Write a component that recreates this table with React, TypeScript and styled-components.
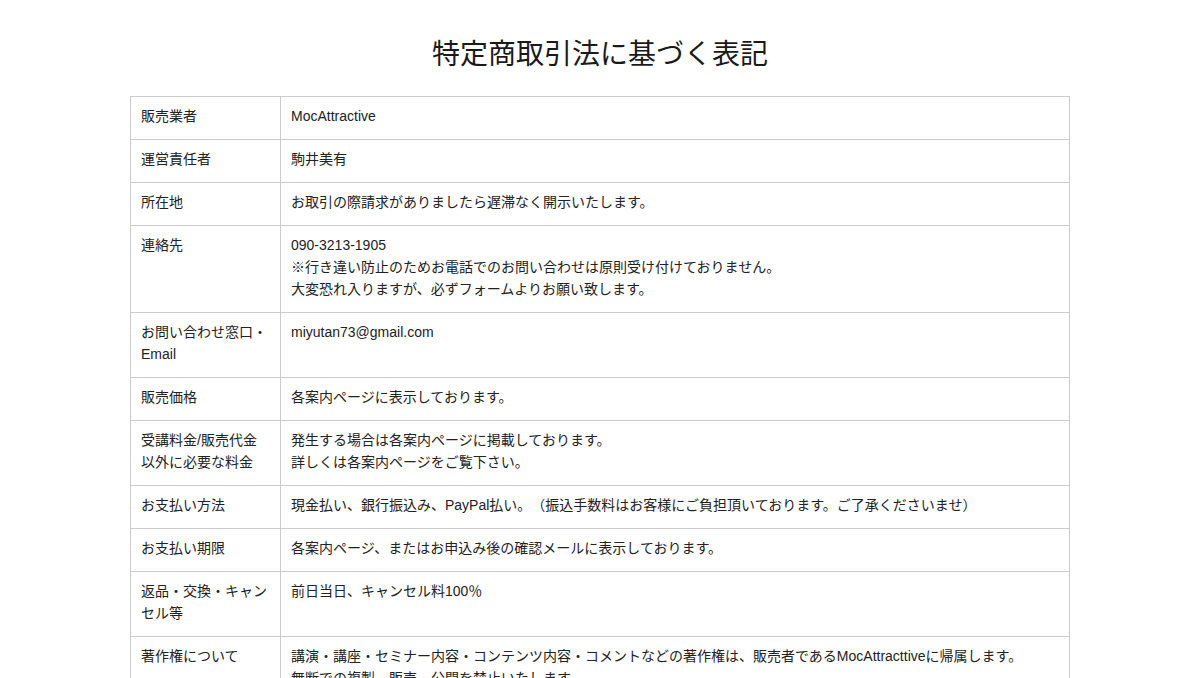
import React from "react";
import styled, { createGlobalStyle } from "styled-components";

const GlobalStyle = createGlobalStyle`
  html, body {
    margin: 0;
    padding: 0;
    background: #ffffff;
  }
  body {
    font-family: "Liberation Sans", Arial, "Noto Sans CJK JP", sans-serif;
    color: #222222;
    text-spacing-trim: space-all;
  }
`;

const Page = styled.main`
  width: 940px;
  margin: 0 auto;
  padding-top: 35px;
`;

const Title = styled.h1`
  margin: 0 0 22px;
  font-size: 28px;
  line-height: 39px;
  font-weight: 400;
  text-align: center;
  color: #1a1a1a;
`;

const Table = styled.table`
  width: 940px;
  border-collapse: collapse;
  table-layout: fixed;
  font-size: 14px;
  line-height: 22px;
`;

const LabelCell = styled.th`
  width: 129px;
  padding: 8px 10px 12px;
  border: 1px solid #cccccc;
  text-align: left;
  vertical-align: top;
  font-weight: 400;
  color: #222222;
`;

const ValueCell = styled.td`
  padding: 8px 10px 12px;
  border: 1px solid #cccccc;
  text-align: left;
  vertical-align: top;
  color: #222222;
`;

type Row = { label: React.ReactNode; value: React.ReactNode };

const rows: Row[] = [
  { label: "販売業者", value: "MocAttractive" },
  { label: "運営責任者", value: "駒井美有" },
  { label: "所在地", value: "お取引の際請求がありましたら遅滞なく開示いたします。" },
  {
    label: "連絡先",
    value: (
      <>
        090-3213-1905
        <br />
        ※行き違い防止のためお電話でのお問い合わせは原則受け付けておりません。
        <br />
        大変恐れ入りますが、必ずフォームよりお願い致します。
      </>
    ),
  },
  {
    label: (
      <>
        お問い合わせ窓口・
        <br />
        Email
      </>
    ),
    value: "miyutan73@gmail.com",
  },
  { label: "販売価格", value: "各案内ページに表示しております。" },
  {
    label: (
      <>
        受講料金/販売代金
        <br />
        以外に必要な料金
      </>
    ),
    value: (
      <>
        発生する場合は各案内ページに掲載しております。
        <br />
        詳しくは各案内ページをご覧下さい。
      </>
    ),
  },
  {
    label: "お支払い方法",
    value:
      "現金払い、銀行振込み、PayPal払い。（振込手数料はお客様にご負担頂いております。ご了承くださいませ）",
  },
  {
    label: "お支払い期限",
    value: "各案内ページ、またはお申込み後の確認メールに表示しております。",
  },
  {
    label: (
      <>
        返品・交換・キャン
        <br />
        セル等
      </>
    ),
    value: "前日当日、キャンセル料100％",
  },
  {
    label: "著作権について",
    value: (
      <>
        講演・講座・セミナー内容・コンテンツ内容・コメントなどの著作権は、販売者であるMocAttracttiveに帰属します。
        <br />
        無断での複製、販売、公開を禁止いたします。
      </>
    ),
  },
];

export default function App() {
  return (
    <>
      <GlobalStyle />
      <Page>
        <Title>特定商取引法に基づく表記</Title>
        <Table>
          <tbody>
            {rows.map((r, i) => (
              <tr key={i}>
                <LabelCell scope="row">{r.label}</LabelCell>
                <ValueCell>{r.value}</ValueCell>
              </tr>
            ))}
          </tbody>
        </Table>
      </Page>
    </>
  );
}
